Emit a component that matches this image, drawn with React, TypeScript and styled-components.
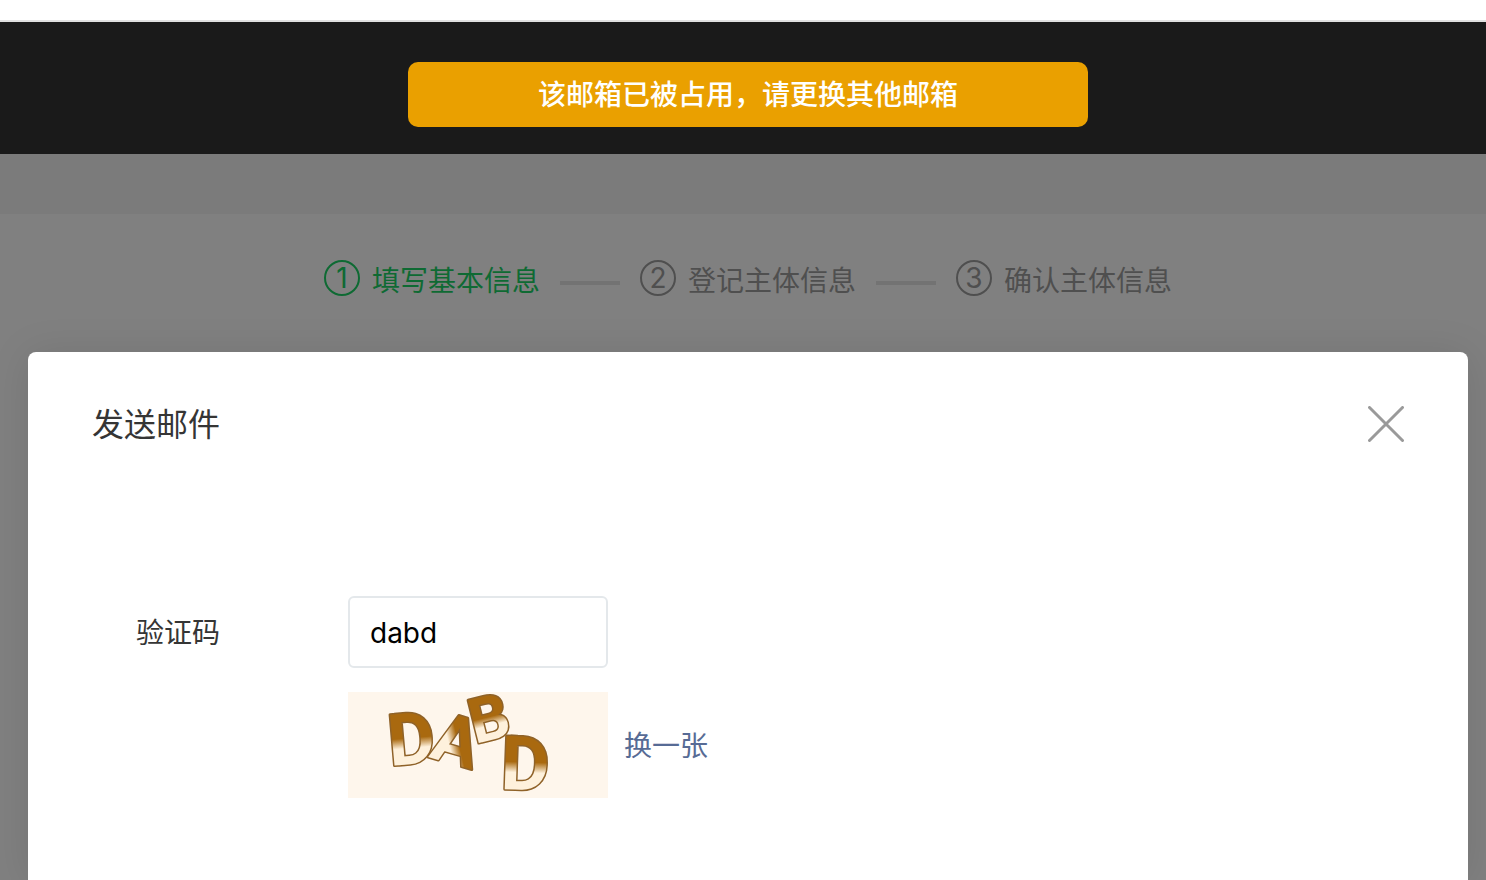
import React, { useId, useState } from "react";
import styled, { createGlobalStyle } from "styled-components";

const GlobalStyle = createGlobalStyle`
  * { box-sizing: border-box; }
  body {
    margin: 0;
    background: #808080;
    font-family: Inter, "Noto Sans CJK SC", sans-serif;
    font-size: 28px;
    line-height: 40px;
  }
`;

const Page = styled.div`
  display: flex;
  flex-direction: column;
  min-height: 100vh;
  overflow: hidden;
`;

const TopStrip = styled.div`
  height: 22px;
  background: #fff;
  border-bottom: 2px solid #e0e0e0;
`;

const Header = styled.header`
  display: flex;
  justify-content: center;
  padding: 40px 0 27px 10px;
  background: #1a1a1a;
`;

const Toast = styled.div`
  width: 680px;
  padding: 13px 20px 12px;
  border-radius: 10px;
  background: #eaa000;
  color: #fff;
  text-align: center;
  font-weight: 500;
`;

const SubHeader = styled.div`
  height: 60px;
  background: #7b7b7b;
`;

const Steps = styled.ol`
  display: flex;
  justify-content: center;
  margin: 0;
  padding: 46px 0 51px 10px;
  list-style: none;
`;

const Step = styled.li<{ $active?: boolean }>`
  display: flex;
  align-items: flex-start;
  color: ${(p) => (p.$active ? "#0e6a33" : "#4f4f4f")};

  &:not(:first-child)::before {
    content: "";
    width: 60px;
    height: 4px;
    margin: 21px 20px 0;
    background: #737373;
  }
`;

const StepNumber = styled.span`
  width: 36px;
  height: 36px;
  margin-right: 12px;
  border: 2px solid currentColor;
  border-radius: 50%;
  line-height: 32px;
  text-align: center;
`;

const StepLabel = styled.span`
  padding-top: 1px;
`;

const Dialog = styled.section`
  flex: 1;
  margin: 0 18px 0 28px;
  padding: 48px 64px 82px;
  border-radius: 8px 8px 0 0;
  background: #fff;
  box-shadow: 0 2px 40px rgba(0, 0, 0, 0.1);
`;

const DialogHeader = styled.div`
  display: flex;
  justify-content: space-between;
  align-items: center;
  height: 48px;
  margin-bottom: 148px;
`;

const DialogTitle = styled.h2`
  margin: 0;
  padding-top: 2px;
  color: #353535;
  font-size: 32px;
  font-weight: 400;
  line-height: 48px;
`;

const CloseButton = styled.button`
  display: flex;
  padding: 0;
  border: 0;
  background: none;
  cursor: pointer;
`;

const Field = styled.div`
  display: flex;
  padding-left: 44px;
`;

const FieldLabel = styled.label`
  width: 212px;
  line-height: 74px;
  color: #353535;
`;

const FieldInput = styled.input`
  display: block;
  width: 260px;
  height: 72px;
  padding: 2px 20px 0;
  border: 2px solid #e4e8eb;
  border-radius: 6px;
  background: #fff;
  color: #000;
  font: inherit;
  outline: none;
`;

const CaptchaRow = styled.div`
  display: flex;
  align-items: center;
  gap: 16px;
  margin-top: 24px;
`;

const CaptchaImage = styled.svg`
  display: block;
  overflow: visible;
  background: #fef6ec;
  font-family: Roboto, sans-serif;
  font-weight: 700;
`;

const CaptchaLetter = styled.text`
  stroke: #8f6228;
  stroke-width: 3px;
  stroke-linejoin: round;
  paint-order: stroke;
`;

const RefreshLink = styled.a`
  padding-top: 2px;
  color: #576b95;
  text-decoration: none;
`;

const STEPS = ["填写基本信息", "登记主体信息", "确认主体信息"];

const LETTERS = [
  { char: "D", x: 42, y: 74, angle: -5, size: 72, shade: [0, 0, 0, 1] },
  { char: "A", x: 80, y: 65, angle: 16, size: 68, shade: [1, 0, 0, 1] },
  { char: "B", x: 127, y: 52, angle: -14, size: 62, shade: [0, 0, 0, 1] },
  { char: "D", x: 152, y: 97, angle: 2, size: 75, shade: [0, 0, 0, 1] },
];

function Captcha() {
  const id = useId();
  return (
    <CaptchaImage width="260" height="106" viewBox="0 0 260 106" role="img" aria-label="验证码图片">
      <defs>
        {LETTERS.map(({ shade: [x1, y1, x2, y2] }, i) => (
          <linearGradient key={i} id={`${id}${i}`} x1={x1} y1={y1} x2={x2} y2={y2}>
            <stop offset="0.48" stopColor="#a9690f" />
            <stop offset="0.6" stopColor="#fef1dc" />
          </linearGradient>
        ))}
      </defs>
      {LETTERS.map((l, i) => (
        <CaptchaLetter
          key={i}
          x={l.x}
          y={l.y}
          fontSize={l.size}
          transform={`rotate(${l.angle} ${l.x} ${l.y})`}
          fill={`url(#${id}${i})`}
        >
          {l.char}
        </CaptchaLetter>
      ))}
    </CaptchaImage>
  );
}

export default function App() {
  const [code, setCode] = useState("dabd");
  return (
    <>
      <GlobalStyle />
      <Page>
        <TopStrip />
        <Header>
          <Toast role="alert">该邮箱已被占用，请更换其他邮箱</Toast>
        </Header>
        <SubHeader />
        <Steps>
          {STEPS.map((label, i) => (
            <Step key={label} $active={i === 0}>
              <StepNumber>{i + 1}</StepNumber>
              <StepLabel>{label}</StepLabel>
            </Step>
          ))}
        </Steps>
        <Dialog role="dialog" aria-labelledby="dialog-title">
          <DialogHeader>
            <DialogTitle id="dialog-title">发送邮件</DialogTitle>
            <CloseButton type="button" aria-label="关闭">
              <svg width="36" height="36" viewBox="0 0 36 36" stroke="#9a9a9a" strokeWidth="3" strokeLinecap="round">
                <path d="M1.5 1.5 34.5 34.5M34.5 1.5 1.5 34.5" />
              </svg>
            </CloseButton>
          </DialogHeader>
          <Field>
            <FieldLabel htmlFor="captcha">验证码</FieldLabel>
            <div>
              <FieldInput id="captcha" type="text" value={code} onChange={(e) => setCode(e.target.value)} />
              <CaptchaRow>
                <Captcha />
                <RefreshLink href="#refresh">换一张</RefreshLink>
              </CaptchaRow>
            </div>
          </Field>
        </Dialog>
      </Page>
    </>
  );
}
